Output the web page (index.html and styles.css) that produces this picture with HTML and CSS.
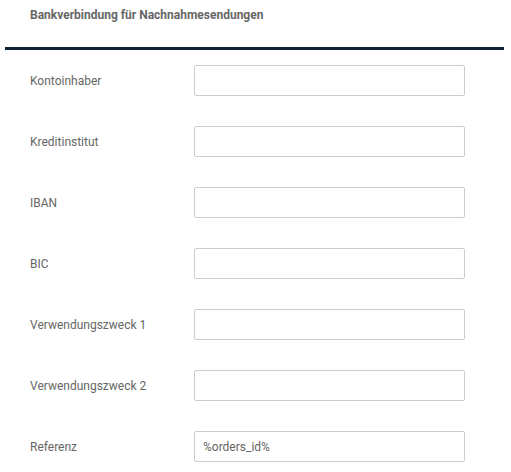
FILE: index.html
```html
<!DOCTYPE html>
<html lang="de">
<head>
<meta charset="utf-8">
<link rel="stylesheet" href="styles.css">
</head>
<body>
<div class="panel">
  <div class="head">Bankverbindung für Nachnahmesendungen</div>
  <div class="rule"></div>
  <div class="rows">
    <div class="row"><label class="lbl">Kontoinhaber</label><input class="inp" type="text"></div>
    <div class="row"><label class="lbl">Kreditinstitut</label><input class="inp" type="text"></div>
    <div class="row"><label class="lbl">IBAN</label><input class="inp" type="text"></div>
    <div class="row"><label class="lbl">BIC</label><input class="inp" type="text"></div>
    <div class="row"><label class="lbl">Verwendungszweck 1</label><input class="inp" type="text"></div>
    <div class="row"><label class="lbl">Verwendungszweck 2</label><input class="inp" type="text"></div>
    <div class="row"><label class="lbl">Referenz</label><input class="inp" type="text" value="%orders_id%"></div>
  </div>
</div>
</body>
</html>
```
FILE: styles.css
```css
html, body {
  margin: 0;
  padding: 0;
  background: #fff;
  font-family: Roboto, "Liberation Sans", sans-serif;
}
.panel {
  width: 511px;
}
.head {
  padding: 7px 0 0 30px;
  height: 47px;
  box-sizing: border-box;
  font-size: 12px;
  font-weight: 700;
  color: #666;
  line-height: 16px;
}
.rule {
  margin: 0 7px 0 5px;
  height: 3px;
  background: #0f2233;
}
.rows {
  padding-top: 15px;
  display: flex;
  flex-direction: column;
  gap: 30px;
}
.row {
  display: flex;
  align-items: center;
  height: 31px;
}
.lbl {
  width: 164px;
  padding-left: 30px;
  font-size: 12px;
  color: #666;
}
.inp {
  box-sizing: border-box;
  width: 271px;
  height: 31px;
  margin: 0;
  border: 1px solid #ccc;
  border-radius: 2px;
  padding: 0 8px;
  font-family: Roboto, "Liberation Sans", sans-serif;
  font-size: 12px;
  color: #666;
  background: #fff;
  outline: none;
}
```
